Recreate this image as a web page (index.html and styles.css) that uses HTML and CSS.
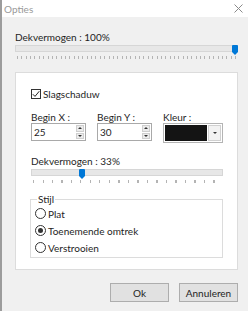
FILE: index.html
```html
<!DOCTYPE html>
<html lang="nl">
<head>
    <meta charset="UTF-8">
    <meta name="viewport" content="width=device-width, initial-scale=1.0">
    <title>Opties</title>
    <link rel="stylesheet" href="styles.css">
</head>
<body>

    <div class="window">
        <!-- Title bar -->
        <div class="titlebar">
            <span class="title">Opties</span>
            <svg class="close" width="9" height="9" viewBox="0 0 9 9">
                <path d="M0.5 0.5 L8.5 8.5 M8.5 0.5 L0.5 8.5" stroke="#8a8a8a" stroke-width="1" fill="none"/>
            </svg>
        </div>

        <div class="content">
            <div class="label">Dekvermogen : 100%</div>
            <div class="slider slider-main">
                <div class="track"></div>
                <div class="ticks"></div>
                <svg class="thumb" style="left: 217px;" width="6" height="10" viewBox="0 0 6 10">
                    <path d="M0 1 Q0 0 1 0 L5 0 Q6 0 6 1 L6 7 L3 10 L0 7 Z" fill="#0078d7"/>
                </svg>
            </div>

            <!-- Shadow options -->
            <div class="panel">
                <label class="check">
                    <span class="checkbox">
                        <svg width="8" height="8" viewBox="0 0 8 8">
                            <path d="M0.8 4.2 L3 6.4 L7.3 1.2" stroke="#222" stroke-width="1" fill="none"/>
                        </svg>
                    </span>
                    Slagschaduw
                </label>

                <div class="fields">
                    <div class="field">
                        <div class="label">Begin X :</div>
                        <div class="spin">
                            <span class="spin-value">25</span>
                            <span class="spin-buttons">
                                <span class="spin-btn"><i class="arrow-up"></i></span>
                                <span class="spin-btn"><i class="arrow-down"></i></span>
                            </span>
                        </div>
                    </div>
                    <div class="field">
                        <div class="label">Begin Y :</div>
                        <div class="spin">
                            <span class="spin-value">30</span>
                            <span class="spin-buttons">
                                <span class="spin-btn"><i class="arrow-up"></i></span>
                                <span class="spin-btn"><i class="arrow-down"></i></span>
                            </span>
                        </div>
                    </div>
                    <div class="field field-color">
                        <div class="label">Kleur :</div>
                        <div class="combo">
                            <span class="swatch"></span>
                            <span class="combo-btn"><i class="arrow-down"></i></span>
                        </div>
                    </div>
                </div>

                <div class="label">Dekvermogen : 33%</div>
                <div class="slider slider-small">
                    <div class="track"></div>
                    <div class="ticks"></div>
                    <svg class="thumb" style="left: 48px;" width="6" height="10" viewBox="0 0 6 10">
                        <path d="M0 1 Q0 0 1 0 L5 0 Q6 0 6 1 L6 7 L3 10 L0 7 Z" fill="#0078d7"/>
                    </svg>
                </div>

                <fieldset class="group">
                    <legend>Stijl</legend>
                    <label class="radio"><span class="dot"></span>Plat</label>
                    <label class="radio"><span class="dot checked"></span>Toenemende omtrek</label>
                    <label class="radio"><span class="dot"></span>Verstrooien</label>
                </fieldset>
            </div>

            <div class="buttons">
                <button class="btn">Ok</button>
                <button class="btn">Annuleren</button>
            </div>
        </div>
    </div>

</body>
</html>
```

FILE: styles.css
```css
body {
    margin: 0;
    font-family: Lato, "Noto Sans", sans-serif;
    font-size: 10px;
    color: #1e1e1e;
    background-color: #f0f0f0;
}
.window {
    width: 248px;
    height: 311px;
    border-left: 2px solid #9c9c9c;
    box-sizing: border-box;
    display: flex;
    flex-direction: column;
    overflow: hidden;
}
.titlebar {
    height: 17px;
    background-color: #fff;
    display: flex;
    align-items: center;
    justify-content: space-between;
    padding: 0 5px 0 2px;
}
.title {
    color: #9a9a9a;
    line-height: 12px;
}
.content {
    flex: 1;
    padding: 14px 10px 0 13px;
}
.label {
    line-height: 12px;
    white-space: nowrap;
}

/* Sliders */
.slider {
    position: relative;
    height: 17px;
}
.track {
    margin-top: 2px;
    height: 5px;
    background-color: #e7e7e7;
    border: 1px solid #d6d6d6;
}
.ticks {
    margin-top: 4px;
    height: 3px;
    margin-left: 2px;
}
.slider-main .ticks {
    background: repeating-linear-gradient(to right, #b4b4b4 0 1px, transparent 1px 4.36px);
}
.slider-small .ticks {
    background: repeating-linear-gradient(to right, #b4b4b4 0 1px, transparent 1px 9.5px);
}
.thumb {
    position: absolute;
    top: 0;
}

/* Panel */
.panel {
    margin-top: 10px;
    background-color: #fff;
    border: 1px solid #dcdcdc;
    height: 198px;
    box-sizing: border-box;
    padding: 15px 14px 0 15px;
}
.check {
    display: flex;
    align-items: center;
    gap: 2px;
    line-height: 12px;
}
.checkbox {
    width: 8px;
    height: 8px;
    border: 1px solid #333;
    display: flex;
}
.fields {
    display: flex;
    gap: 11px;
    margin-top: 11px;
}
.field {
    display: flex;
    flex-direction: column;
}
.spin {
    width: 53px;
    height: 16px;
    border: 1px solid #a9a9a9;
    display: flex;
    justify-content: space-between;
}
.spin-value {
    padding-left: 2px;
    line-height: 16px;
}
.spin-buttons {
    display: flex;
    flex-direction: column;
    gap: 1px;
    padding: 1px;
}
.spin-btn {
    flex: 1;
    width: 6px;
    background-color: #ececec;
    border: 1px solid #cfcfcf;
    display: flex;
    align-items: center;
    justify-content: center;
}
.arrow-up {
    border-left: 2px solid transparent;
    border-right: 2px solid transparent;
    border-bottom: 2px solid #333;
}
.arrow-down {
    border-left: 2px solid transparent;
    border-right: 2px solid transparent;
    border-top: 2px solid #333;
}
.combo {
    width: 56px;
    height: 16px;
    border: 1px solid #b4b4b4;
    display: flex;
    padding: 1px;
    gap: 1px;
}
.swatch {
    flex: 1;
    background-color: #141414;
}
.combo-btn {
    width: 11px;
    background-color: #f2f2f2;
    border: 1px solid #d0d0d0;
    display: flex;
    align-items: center;
    justify-content: center;
}
.panel > .label {
    margin-top: 12px;
}

/* Group box */
.group {
    margin: 7px 0 0 -1px;
    padding: 0 0 0 4px;
    border: 1px solid #dcdcdc;
    height: 65px;
    box-sizing: border-box;
}
.group legend {
    padding: 0 1px;
    margin-left: 2px;
    line-height: 12px;
}
.radio {
    display: flex;
    align-items: center;
    gap: 2px;
    height: 17px;
}
.dot {
    width: 9px;
    height: 9px;
    border: 1px solid #333;
    border-radius: 50%;
    display: flex;
    align-items: center;
    justify-content: center;
}
.dot.checked::after {
    content: "";
    width: 5px;
    height: 5px;
    border-radius: 50%;
    background-color: #333;
}

/* Buttons */
.buttons {
    display: flex;
    justify-content: flex-end;
    gap: 10px;
    margin-top: 13px;
}
.btn {
    width: 59px;
    height: 19px;
    padding: 0;
    font-family: inherit;
    font-size: 10px;
    color: #1e1e1e;
    background-color: #e1e1e1;
    border: 1px solid #adadad;
}
```
